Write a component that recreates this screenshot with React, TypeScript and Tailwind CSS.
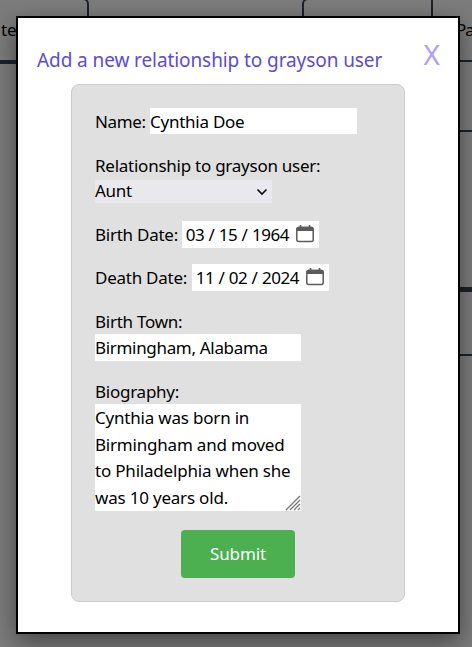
import type { ReactNode } from "react";

function CalendarIcon() {
  return (
    <svg width="18" height="18" viewBox="0 0 18 18" className="block shrink-0" aria-hidden="true">
      <rect x="0.8" y="2.6" width="16.400" height="13.8" rx="2" fill="none" stroke="#5b5b5b" strokeWidth="1.5" />
      <path d="M0.500 3.500a1.800 1.800 0 0 1 1.800-1.800h13.400a1.800 1.800 0 0 1 1.800 1.800V6H0.500z" fill="#5b5b5b" />
      <path d="M4.500 0v3M13.500 0v3" stroke="#5b5b5b" strokeWidth="1.600" />
    </svg>
  );
}

function DateField({ label, labelWidth, month, day, year }: { label: string; labelWidth: string; month: string; day: string; year: string }) {
  return (
    <div className="flex h-[27px]">
      <span className={`${labelWidth} shrink-0 pt-px`}>{label}</span>
      <div className="flex h-[27px] w-[137px] items-center bg-white pl-[3px] tracking-[-0.45px]">
        <span className="w-[20px] pt-0.5 text-center">{month}</span>
        <span className="w-[13px] pt-0.5 text-center">/</span>
        <span className="w-[20px] pt-0.5 text-center">{day}</span>
        <span className="w-[13px] pt-0.5 text-center">/</span>
        <span className="w-[39px] pt-0.5 text-center">{year}</span>
        <span className="-mt-0.5 ml-[6px]"><CalendarIcon /></span>
      </div>
    </div>
  );
}

function Label({ children }: { children: ReactNode }) {
  return <div className="h-[26px] pt-px">{children}</div>;
}

/* The dimmed family tree lying behind the dialog. */
function TreeBackdrop() {
  return (
    <div className="absolute inset-0 bg-[#7c7c7c] text-[17px] text-black">
      <div className="absolute -left-5 top-[60px] h-1 w-14 bg-[#1c2129]" />
      <div className="absolute -left-10 -top-0.5 h-[64px] w-[129px] rounded-md border-2 border-[#1c2129]" />
      <div className="absolute left-[302px] -top-0.5 h-[64px] w-[131px] rounded-l-md border-2 border-[#1c2129]" />
      <div className="absolute left-[431px] -top-10 h-[102px] w-[90px] border-2 border-[#1c2129]" />
      <span className="absolute left-[1px] top-[17px]">te</span>
      <span className="absolute left-[456px] top-[17px] tracking-[-1px]">Pa</span>
      <div className="absolute left-[440px] top-[130px] h-[226px] w-20 border-y-2 border-[#1c2129]" />
      <div className="absolute left-[440px] top-[287px] h-[5px] w-20 bg-[#1c2129]" />
    </div>
  );
}

export default function App() {
  return (
    <div className="relative h-[647px] w-[472px] overflow-hidden font-['Noto_Sans','Open_Sans',sans-serif] text-[17px] leading-[26.67px] tracking-[-0.25px] text-black">
      <TreeBackdrop />
      <main className="absolute left-4 top-4 flex h-[618px] w-[444px] flex-col border-2 border-black bg-white pl-[19px] pr-[18px] shadow-[0_8px_22px_rgba(0,0,0,0.45)]">
        <header className="flex h-[66px] shrink-0 justify-between">
          <h1 className="mt-[27px] whitespace-nowrap text-[19px] leading-[30px] tracking-[-0.09px] text-[#5b4bd5]">Add a new relationship to grayson user</h1>
          <button className="mt-[21px] h-[30px] text-[28px] leading-[30px] tracking-normal text-[#b19cff]">X</button>
        </header>
        <form className="ml-[34px] flex h-[518px] w-[334px] shrink-0 flex-col rounded-lg border border-[#ccc] bg-[#e0e0e0] pl-[23px] pt-[23px]">
          <div className="flex h-[26px]">
            <span className="w-[55px] shrink-0 pt-px tracking-[-0.35px]">Name:</span>
            <div className="w-[207px] bg-white pt-px">Cynthia Doe</div>
          </div>
          <div className="mt-[19px] h-[50px]">
            <div className="h-[27px]">Relationship to grayson user:</div>
            <div className="flex h-[23px] w-[177px] items-center justify-between bg-[#e9e9ed] pr-1">
              <span>Aunt</span>
              <svg width="12" height="12" viewBox="0 0 12 12" fill="none" stroke="#111" strokeWidth="1.700"><path d="M1.500 3.500l4.500 4.500 4.500-4.500" /></svg>
            </div>
          </div>
          <div className="mt-[18px] flex flex-col gap-4">
            <DateField label="Birth Date:" labelWidth="w-[87px]" month="03" day="15" year="1964" />
            <DateField label="Death Date:" labelWidth="w-[97px]" month="11" day="02" year="2024" />
          </div>
          <div className="mt-[17px]">
            <Label>Birth Town:</Label>
            <div className="h-[27px] w-[206px] bg-white pt-px tracking-[-0.32px]">Birmingham, Alabama</div>
          </div>
          <div className="mt-[17px]">
            <Label>Biography:</Label>
            <div className="relative h-[107px] w-[206px] whitespace-nowrap bg-white pt-px tracking-[-0.2px]">
              Cynthia was born in<br />Birmingham and moved<br />to Philadelphia when she<br />was 10 years old.
              <svg width="16" height="16" viewBox="0 0 16 16" className="absolute bottom-0 right-0" fill="none" stroke="#777" strokeWidth="1.3"><path d="M1 15L15 1M5 15L15 5M9 15l6-6M13 15l2-2" /></svg>
            </div>
          </div>
          <button type="button" className="ml-[86px] mt-[19px] h-12 w-[114px] rounded bg-[#4caf50] pt-px tracking-[-0.1px] text-white">Submit</button>
        </form>
      </main>
    </div>
  );
}
